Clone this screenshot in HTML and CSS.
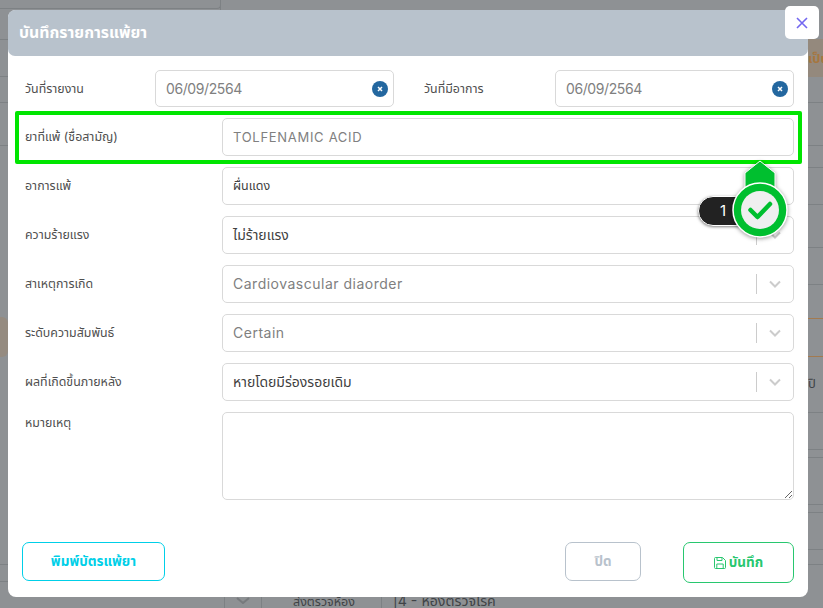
FILE: index.html
```html
<!DOCTYPE html>
<html lang="th">
<head>
<meta charset="utf-8">
<title>บันทึกรายการแพ้ยา</title>
<link rel="stylesheet" href="styles.css">
</head>
<body>
<div class="backdrop">
  <i class="panel"></i><i class="vline v0"></i>
  <i class="line l y39"></i><i class="line l y76"></i><i class="line l y102"></i><i class="line l y145"></i><i class="line l y564"></i><i class="line l y581"></i>
  <i class="line r y102"></i><i class="line r y145"></i><i class="line r y167"></i><i class="line r y204"></i><i class="line r y247"></i><i class="line r y284"></i>
  <i class="line r y412"></i><i class="line r y449"></i><i class="line r y457"></i><i class="line r y504"></i><i class="line r y512"></i><i class="line r y549"></i><i class="line r y564"></i>
  <i class="orange o1"></i><i class="orange o2"></i>
  <i class="blob"></i>
  <span class="peek-orange">เป็น</span>
  <span class="peek-side">ปิ</span>
  <i class="vline v1"></i><i class="vline v2"></i><i class="vline v3"></i>
  <svg class="peek-chevron" width="14" height="7" viewBox="0 0 14 7"><path d="M1 1l6 5 6-5" stroke="#777a7d" stroke-width="2" fill="none"/></svg>
  <span class="peek-bottom">ส่งตรวจห้อง</span>
  <span class="peek-room">|4 - ห้องตรวจโรค</span>
</div>
<section class="modal">
  <header class="modal-head">บันทึกรายการแพ้ยา</header>
  <button class="close" aria-label="ปิด"><svg width="12" height="12" viewBox="0 0 12 12"><path d="M1 1l10 10M11 1L1 11" stroke="#7367f0" stroke-width="1.6" fill="none"/></svg></button>
  <form class="modal-body">
    <div class="row row-dates">
      <label class="lbl date-lbl">วันที่รายงาน</label>
      <div class="field date"><span>06/09/2564</span><b class="clear"><svg width="6" height="6" viewBox="0 0 6 6"><path d="M1 1l4 4M5 1L1 5" stroke="#fff" stroke-width="1.5"/></svg></b></div>
      <label class="lbl date-lbl second">วันที่มีอาการ</label>
      <div class="field date"><span>06/09/2564</span><b class="clear"><svg width="6" height="6" viewBox="0 0 6 6"><path d="M1 1l4 4M5 1L1 5" stroke="#fff" stroke-width="1.5"/></svg></b></div>
    </div>
    <div class="row"><label class="lbl">ยาที่แพ้ (ชื่อสามัญ)</label><div class="field muted latin-wide">TOLFENAMIC ACID</div></div>
    <div class="row"><label class="lbl">อาการแพ้</label><div class="field dark small">ผื่นแดง</div></div>
    <div class="row"><label class="lbl">ความร้ายแรง</label><div class="field dark select"><span>ไม่ร้ายแรง</span><span class="caret"><svg width="12" height="8" viewBox="0 0 12 8"><path d="M1 1.500l5 5 5-5" stroke="#ccc" stroke-width="2" fill="none"/></svg></span></div></div>
    <div class="row"><label class="lbl">สาเหตุการเกิด</label><div class="field muted select spaced"><span>Cardiovascular diaorder</span><span class="caret"><svg width="12" height="8" viewBox="0 0 12 8"><path d="M1 1.500l5 5 5-5" stroke="#ccc" stroke-width="2" fill="none"/></svg></span></div></div>
    <div class="row"><label class="lbl">ระดับความสัมพันธ์</label><div class="field muted select spaced"><span>Certain</span><span class="caret"><svg width="12" height="8" viewBox="0 0 12 8"><path d="M1 1.500l5 5 5-5" stroke="#ccc" stroke-width="2" fill="none"/></svg></span></div></div>
    <div class="row"><label class="lbl">ผลที่เกิดขึ้นภายหลัง</label><div class="field dark select"><span>หายโดยมีร่องรอยเดิม</span><span class="caret"><svg width="12" height="8" viewBox="0 0 12 8"><path d="M1 1.500l5 5 5-5" stroke="#ccc" stroke-width="2" fill="none"/></svg></span></div></div>
    <div class="row row-note"><label class="lbl">หมายเหตุ</label><textarea class="note"></textarea></div>
    <div class="actions">
      <button type="button" class="btn print">พิมพ์บัตรแพ้ยา</button>
      <button type="button" class="btn shut">ปิด</button>
      <button type="button" class="btn save"><svg width="12" height="12" viewBox="0 0 12 12" fill="none" stroke="#28c76f" stroke-width="1"><path d="M1.500.5h7l3 3v7a1 1 0 0 1-1 1h-9a1 1 0 0 1-1-1v-9a1 1 0 0 1 1-1z"/><path d="M3 .8v2.700h5V.8M2.800 11.300V7h6.400v4.300"/></svg>บันทึก</button>
    </div>
  </form>
</section>
<div class="highlight"></div>
<div class="step-badge">1</div>
<svg class="beacon" width="60" height="82" viewBox="0 0 60 82">
  <path d="M30 1l15 12v18h-30V13z" fill="#00bf2f" stroke="#fff" stroke-width="1"/>
  <circle cx="30" cy="50" r="27" fill="#00bf2f" stroke="#fff" stroke-width="1.500"/>
  <circle cx="30" cy="50" r="19" fill="#efefef"/>
  <path d="M20.500 50l7 7L40 44" fill="none" stroke="#00bf2f" stroke-width="4.500" stroke-linecap="round" stroke-linejoin="round"/>
</svg>
</body>
</html>
```
FILE: styles.css
```css
* { box-sizing: border-box; }
html, body { margin: 0; height: 100%; }
body {
  width: 823px; height: 608px; overflow: hidden; position: relative;
  background: #8e9194;
  font-family: Inter, "Noto Sans", "Noto Sans Thai", "Noto Sans CJK SC", sans-serif;
}
.backdrop { position: absolute; inset: 0; overflow: hidden; }
.panel { position: absolute; left: -5px; top: -5px; width: 226px; height: 14px; border: solid #7d8184; border-width: 0 1px 1px 0; border-radius: 0 0 4px 0; }
.line { position: absolute; height: 1px; background: #7d8184; }
.line.l { left: 0; width: 8px; }
.line.r { right: 0; width: 15px; }
.y39 { top: 39px; } .y76 { top: 76px; } .y102 { top: 102px; } .y145 { top: 145px; }
.y167 { top: 167px; } .y204 { top: 204px; } .y247 { top: 247px; } .y284 { top: 284px; }
.y412 { top: 412px; } .y449 { top: 449px; } .y457 { top: 457px; } .y504 { top: 504px; }
.y512 { top: 512px; } .y549 { top: 549px; } .y564 { top: 564px; } .y581 { top: 581px; }
.orange { position: absolute; right: 0; width: 15px; height: 1px; background: #a37a4f; }
.o1 { top: 318px; }
.o2 { top: 356px; }
.blob { position: absolute; left: -6px; top: 317px; width: 14px; height: 40px; border-radius: 6px; background: #958b80; }
.peek-orange { position: absolute; left: 808px; top: 39px; width: 15px; height: 38px; overflow: hidden; background: #94897d; color: #a6763f; font-size: 13px; line-height: 38px; font-weight: 700; white-space: nowrap; }
.peek-side { position: absolute; left: 808px; top: 374px; color: #3f4346; font-size: 13px; line-height: 18px; }
.vline { position: absolute; width: 1px; background: #7d8184; }
.v0 { left: 220px; top: 0; height: 10px; }
.v1 { left: 224px; top: 597px; height: 11px; }
.v2 { left: 261px; top: 597px; height: 11px; }
.v3 { left: 381px; top: 597px; height: 11px; }
.peek-chevron { position: absolute; left: 236px; top: 597px; }
.peek-bottom { position: absolute; left: 293px; top: 594px; color: #3f4346; font-size: 12.5px; line-height: 16px; }
.peek-room { position: absolute; left: 393px; top: 593px; color: #3f4346; font-size: 14.2px; line-height: 16px; }

.modal {
  position: absolute; left: 8px; top: 10px; width: 800px; height: 587px;
  background: #fff; border-radius: 8px;
  display: flex; flex-direction: column;
}
.modal-head {
  height: 46px; padding: 0 11px; flex: none;
  background: #b8c2cc; color: #fff; border-radius: 7px;
  font-size: 15.8px; font-weight: 700; line-height: 46px;
}
.close {
  position: absolute; right: -11px; top: -4px; width: 34px; height: 33px;
  border: 0; border-radius: 5px; background: #fff; padding: 0;
  display: flex; align-items: center; justify-content: center;
}
.modal-body { flex: 1; display: flex; flex-direction: column; padding: 14px 14px 0 14px; gap: 11px; }
.row { display: flex; align-items: center; height: 38px; }
.row-dates { height: 37px; }
.lbl { width: 200px; flex: none; padding: 1px 0 0 3px; font-size: 12.4px; color: #4f4f4f; }
.date-lbl { width: 133px; }
.date-lbl.second { width: 131px; margin-left: 30px; padding-left: 0; }
.field {
  flex: 1; height: 38px; min-width: 0; border: 1px solid #d9d9d9; border-radius: 5px; background: #fff;
  padding: 0 10px; font-size: 14px; line-height: 36px; display: flex; align-items: center; white-space: nowrap;
}
.date { height: 37px; justify-content: space-between; color: #808080; letter-spacing: -.4px; padding-right: 5px; }
.muted { color: #808080; }
.dark { color: #3f3f3f; }
.small { font-size: 12.5px; }
.latin-wide { font-size: 13px; letter-spacing: .7px; }
.spaced { letter-spacing: .5px; }
.select { justify-content: space-between; padding-right: 0; }
.caret { width: 37px; height: 20px; border-left: 1px solid #ccc; display: flex; align-items: center; justify-content: center; }
.clear { width: 16px; height: 16px; border-radius: 50%; background: #23679f; display: flex; align-items: center; justify-content: center; }
.row-note { height: 88px; align-items: flex-start; }
.row-note .lbl { padding-top: 2px; }
.note { flex: 1; height: 88px; border: 1px solid #d9d9d9; border-radius: 5px; }
.actions { display: flex; align-items: flex-start; margin-top: 31px; }
.btn { height: 39px; border-radius: 7px; background: #fff; font-family: inherit; font-size: 13.5px; font-weight: 700; border: 1px solid; padding: 0; }
.print { width: 143px; margin-right: 400px; border-color: #00cfe8; color: #00cfe8; }
.shut { width: 76px; margin-right: 42px; border-color: #b8c2cc; color: #b8c2cc; }
.save { width: 111px; height: 41px; border-color: #28c76f; color: #28c76f; display: flex; align-items: center; justify-content: center; gap: 3px; }
.highlight {
  position: absolute; left: 15px; top: 111px; width: 787px; height: 53px;
  border: 4px solid #00e500; border-radius: 2px;
}
.step-badge {
  position: absolute; left: 698px; top: 196px; width: 62px; height: 30px;
  padding-left: 21px; background: #222; border: 1px solid #fff; border-radius: 15px;
  color: #fff; font-size: 15px; line-height: 28px; box-shadow: 0 1px 3px rgba(0,0,0,.5);
}
.beacon { position: absolute; left: 730px; top: 160px; filter: drop-shadow(0 1px 2px rgba(0,0,0,.4)); }
```
